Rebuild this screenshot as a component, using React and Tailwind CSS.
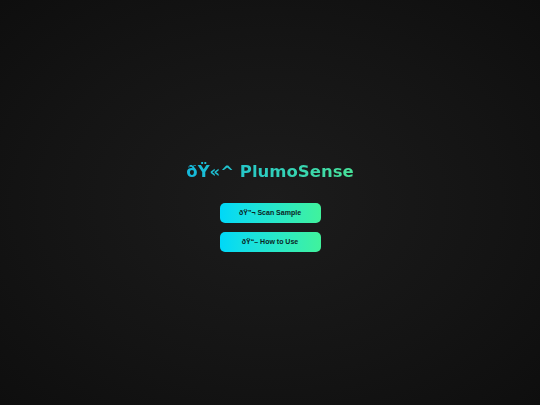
import React from 'react'

// Menu button
function MenuButton({ children }) {
  return (
    <button className="w-[101px] h-5 rounded-[5px] bg-gradient-to-r from-[#00d8f8] to-[#40f29c] text-[#0a2424] text-[7px] font-bold font-['Liberation_Sans',Arial,sans-serif] leading-none flex items-center justify-center">
      {children}
    </button>
  )
}

export default function App() {
  return (
    <div className="w-[540px] h-[405px] bg-[radial-gradient(ellipse_at_center,#1c1c1c_0%,#141414_60%,#0e0e0e_100%)] flex flex-col items-center justify-center">
      <h1 className="text-[16.5px] leading-[1.3] font-bold font-['DejaVu_Sans',sans-serif] bg-gradient-to-r from-[#14b8dc] to-[#48e298] bg-clip-text text-transparent mb-[20px] mt-[8px]">
        ðŸ«^ PlumoSense
      </h1>
      <div className="flex flex-col gap-[9px]">
        <MenuButton>ðŸ”¬ Scan Sample</MenuButton>
        <MenuButton>ðŸ“– How to Use</MenuButton>
      </div>
    </div>
  )
}
